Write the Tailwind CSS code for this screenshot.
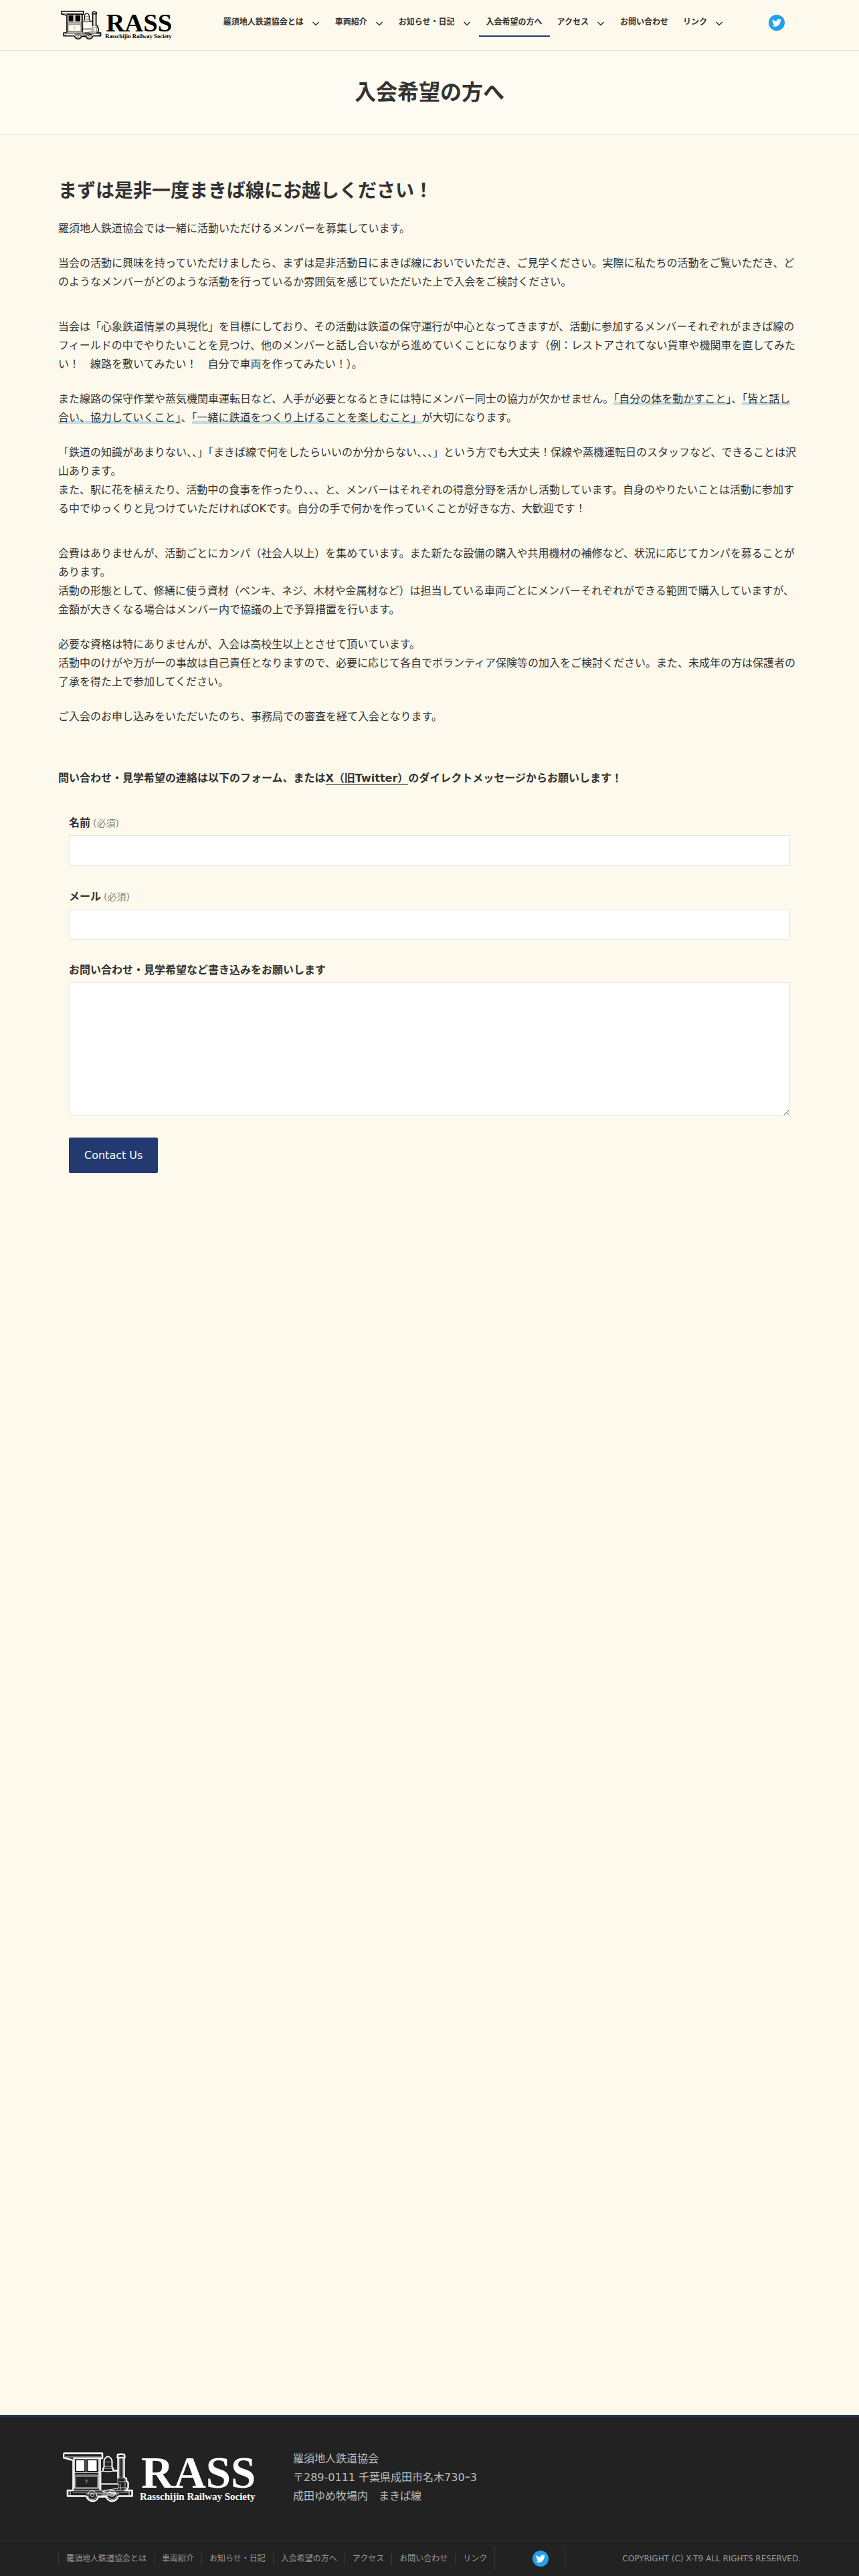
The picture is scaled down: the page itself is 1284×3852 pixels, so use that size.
<!DOCTYPE html>
<html lang="ja">

<head>
  <meta charset="utf-8">
  <meta name="viewport" content="width=device-width, initial-scale=1">
  <title>入会希望の方へ - 羅須地人鉄道協会</title>
  <script src="https://cdn.jsdelivr.net/npm/@tailwindcss/browser@4"></script>
</head>

<body class="min-h-screen flex flex-col bg-[#fdf9ec] text-[#333] text-base leading-7 font-['DejaVu_Sans','Noto_Sans_CJK_JP',sans-serif]">

  <!-- shared icons -->
  <svg class="hidden" aria-hidden="true">
    <symbol id="logo" viewBox="0 0 288 76">
      <g fill="none" stroke="currentColor" stroke-linejoin="round">
        <path stroke-width="2.6" d="M1 1.500H59V9H55.500V56M1 1.500V8L15.500 12V56M15 9H58" />
        <path stroke-width="0.800" d="M3 7H57M17.500 10V54H53.500V10M17.500 30.500H53.500M17.500 34H53.500M19 36H52V53H19zM34.500 10V30" />
        <path fill="currentColor" stroke="none" d="M20 12H32V28H20zM37.500 12H50.500V28H37.500z" />
        <path stroke-width="2" d="M60 28V24L61.500 22V13Q62 9 66 6.500H68.500Q73 9 73.500 13V22L75 24V27H82" />
        <path stroke-width="0.700" d="M61 14.500H74M61 21H74M60 24H75M61 28Q67 31 74 28" />
        <path stroke-width="0.800" d="M56 28.500H82V46.500H56M56 48.500H84M57 28V56" />
        <path stroke-width="2.400" d="M82.500 8V39M91.500 8V38M82 3.500Q87 2 92 3.500L92.500 8H81.500z" />
        <path stroke-width="0.700" d="M85 9V39M89 9V39M83 38.500H91" />
        <path stroke-width="2.400" d="M91.500 37.500L95 39V43L97.500 45V53L95 56" />
        <path stroke-width="0.700" d="M84 48L82 56M86 47V56M93 40V55M84 44H93M84 53H96" />
        <path stroke-width="2.600" d="M15.500 57H7V65.500H35M83 65.500H103.500V57H92" />
        <path stroke-width="0.900" d="M15 57H92M15 59.500H100M11 57V65M99 57V65M35 62H84M50 65H66M58 58L80 62M60 60H78V64H58M62 57L82 54" />
        <path stroke-width="2.600" d="M35.500 65.500A9 9 0 0 0 53 66.500H65A9 9 0 0 0 82.500 65.500" />
        <circle stroke-width="0.900" cx="44" cy="64" r="6.500" />
        <circle stroke-width="0.900" cx="44" cy="64" r="2.500" />
        <circle stroke-width="0.900" cx="73.500" cy="64" r="6.500" />
        <circle stroke-width="0.900" cx="73.500" cy="64" r="2.500" />
      </g>
      <g fill="currentColor" font-family="'Liberation Serif', serif" font-weight="bold">
        <text x="33" y="47" font-size="8" font-weight="normal">7</text>
        <text x="117" y="53" font-size="67">RASS</text>
        <text x="115" y="71" font-size="15">Rasschijin Railway Society</text>
      </g>
    </symbol>
    <symbol id="bird" viewBox="0 0 24 24">
      <path fill="currentColor" d="M23.953 4.570a10 10 0 01-2.825.775 4.958 4.958 0 002.163-2.723c-.951.555-2.005.959-3.127 1.184a4.920 4.920 0 00-8.384 4.482C7.690 8.095 4.067 6.130 1.640 3.162a4.822 4.822 0 00-.666 2.475c0 1.710.870 3.213 2.188 4.096a4.904 4.904 0 01-2.228-.616v.060a4.923 4.923 0 003.946 4.827 4.996 4.996 0 01-2.212.085 4.936 4.936 0 004.604 3.417 9.867 9.867 0 01-6.102 2.105c-.390 0-.779-.023-1.170-.067a13.995 13.995 0 007.557 2.209c9.053 0 13.998-7.496 13.998-13.985 0-.210 0-.420-.015-.630A9.935 9.935 0 0024 4.590z" />
    </symbol>
    <symbol id="chevron" viewBox="0 0 12 12">
      <path fill="none" stroke="currentColor" stroke-width="1.500" d="M1.500 4L6 8.500L10.500 4" />
    </symbol>
  </svg>

  <header class="border-b border-[#e3e0d6]">
    <div class="max-w-[1110px] mx-auto flex items-center h-[75px]">
      <a href="#" aria-label="RASS Rasschijin Railway Society" class="ml-1 text-black">
        <svg class="w-[166px] h-11"><use href="#logo" /></svg>
      </a>
      <nav class="ml-auto pb-[9px] flex text-xs font-bold whitespace-nowrap">
        <div class="flex items-center h-11 pl-[11px]">
          <a href="#">羅須地人鉄道協会とは</a>
          <button class="w-9 grid place-items-center pt-1" aria-label="サブメニュー"><svg class="size-3"><use href="#chevron" /></svg></button>
        </div>
        <div class="flex items-center h-11 pl-[11px]">
          <a href="#">車両紹介</a>
          <button class="w-9 grid place-items-center pt-1" aria-label="サブメニュー"><svg class="size-3"><use href="#chevron" /></svg></button>
        </div>
        <div class="flex items-center h-11 pl-[11px]">
          <a href="#">お知らせ・日記</a>
          <button class="w-9 grid place-items-center pt-1" aria-label="サブメニュー"><svg class="size-3"><use href="#chevron" /></svg></button>
        </div>
        <a href="#" class="flex items-center h-11 px-[11px] border-y-2 border-t-transparent border-b-[#233a70]">入会希望の方へ</a>
        <div class="flex items-center h-11 pl-[11px]">
          <a href="#">アクセス</a>
          <button class="w-9 grid place-items-center pt-1" aria-label="サブメニュー"><svg class="size-3"><use href="#chevron" /></svg></button>
        </div>
        <a href="#" class="flex items-center h-11 px-[11px]">お問い合わせ</a>
        <div class="flex items-center h-11 pl-[11px]">
          <a href="#">リンク</a>
          <button class="w-9 grid place-items-center pt-1" aria-label="サブメニュー"><svg class="size-3"><use href="#chevron" /></svg></button>
        </div>
      </nav>
      <a href="#" aria-label="Twitter" class="ml-14 mr-6 mb-[7px] size-6 rounded-full bg-[#21a0ec] text-white grid place-items-center">
        <svg class="size-[14px]"><use href="#bird" /></svg>
      </a>
    </div>
  </header>

  <div class="h-[126px] pb-0.5 grid place-items-center bg-[#fffcf4] border-b border-[#e3e0d6]">
    <h1 class="text-[32px] leading-10 font-bold">入会希望の方へ</h1>
  </div>

  <main class="grow w-full max-w-[1110px] mx-auto pt-16 pb-20">
    <h2 class="text-[28px] leading-10 font-bold mb-[22px]">まずは是非一度まきば線にお越しください！</h2>

    <div class="grid gap-6">
      <p>羅須地人鉄道協会では一緒に活動いただけるメンバーを募集しています。</p>
      <p>当会の活動に興味を持っていただけましたら、まずは是非活動日にまきば線においでいただき、ご見学ください。実際に私たちの活動をご覧いただき、どのようなメンバーがどのような活動を行っているか雰囲気を感じていただいた上で入会をご検討ください。</p>
      <p class="mt-[15px]">当会は「心象鉄道情景の具現化」を目標にしており、その活動は鉄道の保守運行が中心となってきますが、活動に参加するメンバーそれぞれがまきば線のフィールドの中でやりたいことを見つけ、他のメンバーと話し合いながら進めていくことになります（例：レストアされてない貨車や機関車を直してみたい！　線路を敷いてみたい！　自分で車両を作ってみたい！）。</p>
      <p>また線路の保守作業や蒸気機関車運転日など、人手が必要となるときには特にメンバー同士の協力が欠かせません。<span class="bg-linear-[transparent_72%,#c5dde0_72%]">「自分の体を動かすこと」</span>、<span class="bg-linear-[transparent_72%,#c5dde0_72%]">「皆と話し合い、協力していくこと」</span>、<span class="bg-linear-[transparent_72%,#c5dde0_72%]">「一緒に鉄道をつくり上げることを楽しむこと」</span>が大切になります。</p>
      <p>「鉄道の知識があまりない、、」「まきば線で何をしたらいいのか分からない、、、」という方でも大丈夫！保線や蒸機運転日のスタッフなど、できることは沢山あります。<br>また、駅に花を植えたり、活動中の食事を作ったり、、、と、メンバーはそれぞれの得意分野を活かし活動しています。自身のやりたいことは活動に参加する中でゆっくりと見つけていただければOKです。自分の手で何かを作っていくことが好きな方、大歓迎です！</p>
      <p class="mt-[15px]">会費はありませんが、活動ごとにカンパ（社会人以上）を集めています。また新たな設備の購入や共用機材の補修など、状況に応じてカンパを募ることがあります。<br>活動の形態として、修繕に使う資材（ペンキ、ネジ、木材や金属材など）は担当している車両ごとにメンバーそれぞれができる範囲で購入していますが、金額が大きくなる場合はメンバー内で協議の上で予算措置を行います。</p>
      <p>必要な資格は特にありませんが、入会は高校生以上とさせて頂いています。<br>活動中のけがや万が一の事故は自己責任となりますので、必要に応じて各自でボランティア保険等の加入をご検討ください。また、未成年の方は保護者の了承を得た上で参加してください。</p>
      <p>ご入会のお申し込みをいただいたのち、事務局での審査を経て入会となります。</p>
      <p class="mt-10 font-bold">問い合わせ・見学希望の連絡は以下のフォーム、または<a href="#" class="border-b border-[#333]">X（旧Twitter）</a>のダイレクトメッセージからお願いします！</p>
    </div>

    <form class="px-4 pt-[39px]" onsubmit="return false">
      <div class="mb-8">
        <label for="name" class="block mb-1 font-bold">名前<span class="ml-1 text-sm font-normal opacity-60">(必須)</span></label>
        <input type="text" id="name" name="name" required class="block w-full h-[46px] px-4 bg-white border border-[#e5e5e5]">
      </div>
      <div class="mb-8">
        <label for="email" class="block mb-1 font-bold">メール<span class="ml-1 text-sm font-normal opacity-60">(必須)</span></label>
        <input type="email" id="email" name="email" required class="block w-full h-[46px] px-4 bg-white border border-[#e5e5e5]">
      </div>
      <div class="mb-8">
        <label for="message" class="block mb-1 font-bold">お問い合わせ・見学希望など書き込みをお願いします</label>
        <textarea id="message" name="message" class="block w-full h-[200px] px-4 py-3 bg-white border border-[#e5e5e5]"></textarea>
      </div>
      <button type="submit" class="h-[53px] px-[23px] rounded-xs bg-[#233a70] text-white">Contact Us</button>
    </form>
  </main>

  <footer class="bg-[#222] text-[#bbb] border-t-3 border-[#233459]">
    <div class="max-w-[1110px] mx-auto h-[185px] pb-1 flex items-center">
      <a href="#" aria-label="RASS Rasschijin Railway Society" class="ml-[7px] mr-14 text-white">
        <svg class="w-72 h-[76px]"><use href="#logo" /></svg>
      </a>
      <p>羅須地人鉄道協会<br>〒289-0111 千葉県成田市名木730ｰ3<br>成田ゆめ牧場内　まきば線</p>
    </div>
    <div class="border-t border-[#3a3a3a]">
      <div class="max-w-[1110px] mx-auto h-[52px] flex items-center text-xs text-[#999] whitespace-nowrap">
        <nav class="flex leading-[18px]">
          <a href="#" class="px-[11px] border-l border-[#3a3a3a]">羅須地人鉄道協会とは</a>
          <a href="#" class="px-[11px] border-l border-[#3a3a3a]">車両紹介</a>
          <a href="#" class="px-[11px] border-l border-[#3a3a3a]">お知らせ・日記</a>
          <a href="#" class="px-[11px] border-l border-[#3a3a3a]">入会希望の方へ</a>
          <a href="#" class="px-[11px] border-l border-[#3a3a3a]">アクセス</a>
          <a href="#" class="px-[11px] border-l border-[#3a3a3a]">お問い合わせ</a>
          <a href="#" class="px-[11px] border-l border-[#3a3a3a]">リンク</a>
        </nav>
        <div class="h-9 pl-14 pr-6 flex items-center border-x border-[#3a3a3a]">
          <a href="#" aria-label="Twitter" class="size-6 rounded-full bg-[#21a0ec] text-white grid place-items-center">
            <svg class="size-[14px]"><use href="#bird" /></svg>
          </a>
        </div>
        <p class="ml-auto">COPYRIGHT (C) X-T9 ALL RIGHTS RESERVED.</p>
      </div>
    </div>
  </footer>

</body>

</html>
